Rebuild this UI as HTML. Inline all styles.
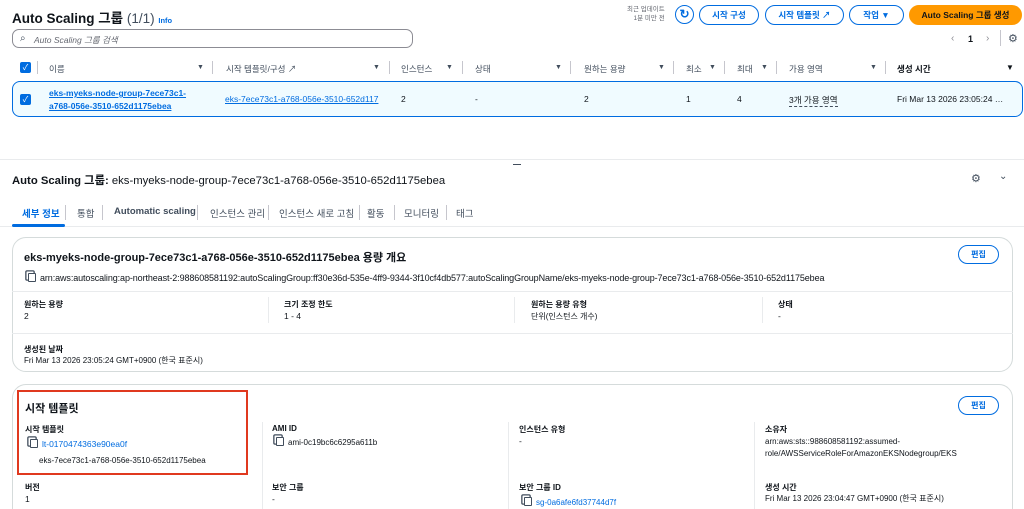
<!DOCTYPE html>
<html><head><meta charset="utf-8"><style>
*{box-sizing:border-box;margin:0;padding:0}
html{width:1024px;height:509px;overflow:hidden}
body{width:1024px;height:509px;overflow:hidden;background:#fff;font-family:"Liberation Sans","Noto Sans CJK KR",sans-serif;color:#0f141a;position:relative;font-size:9px}
.a{position:absolute;white-space:nowrap}
.btn{position:absolute;height:20px;border:1.5px solid #006ce0;border-radius:10px;color:#006ce0;font-weight:bold;font-size:8.5px;display:flex;align-items:center;justify-content:center}
.lnk{color:#006ce0}
.u{text-decoration:underline}
.hdr{font-size:8.5px;color:#414d5c}
.sep{position:absolute;width:1px;background:#c6c6cd}
.tri{font-size:7px;color:#414d5c}
.card{position:absolute;border:1px solid #d5dbdb;border-radius:14px;background:#fff}
.lbl{font-size:8px;font-weight:bold;color:#0f141a}
.val{font-size:8.5px;color:#0f141a}
.cb{position:absolute;width:11px;height:11px;background:#006ce0;border-radius:2px;color:#fff;font-size:8px;line-height:11px;text-align:center}
.copy{display:inline-block;width:8px;height:9px;border:1.3px solid #414d5c;border-radius:1px;margin-right:4px;vertical-align:-1px;box-shadow:-2px -2px 0 -0.5px #fff,-2px -2px 0 0.8px #414d5c}
.tab{position:absolute;top:206px;font-size:9.5px;color:#414d5c;white-space:nowrap}
</style></head><body>
<div class="a" style="left:12px;top:7px;font-size:13.5px;font-weight:bold">Auto Scaling 그룹 <span style="font-weight:normal;color:#414d5c">(1/1)</span> <span style="font-size:7.5px;color:#006ce0">Info</span></div>
<div class="a" style="left:627px;top:5px;font-size:6.5px;color:#656871;text-align:right;line-height:9px">최근 업데이트<br>&nbsp;&nbsp;1분 미만 전</div>
<div class="a" style="left:675px;top:5px;width:19px;height:19px;border:1.5px solid #006ce0;border-radius:50%;color:#006ce0;font-size:12px;text-align:center;line-height:16px;font-weight:bold">↻</div>
<div class="btn" style="left:699px;top:5px;width:60px">시작 구성</div>
<div class="btn" style="left:765px;top:5px;width:79px">시작 템플릿 ↗</div>
<div class="btn" style="left:849px;top:5px;width:55px">작업 ▼</div>
<div class="btn" style="left:909px;top:5px;width:113px;background:#ff9900;border-color:#ff9900;color:#0f141a">Auto Scaling 그룹 생성</div>
<div class="a" style="left:12px;top:29px;width:401px;height:19px;border:1px solid #8c8c94;border-radius:7px"></div>
<div class="a" style="left:20px;top:33px;font-size:10px;color:#414d5c">⌕</div>
<div class="a" style="left:34px;top:34px;font-size:8.5px;font-style:italic;color:#656871">Auto Scaling 그룹 검색</div>
<div class="a" style="left:951px;top:33px;color:#8c8c94;font-size:10px">‹</div>
<div class="a" style="left:968px;top:34px;font-weight:bold;font-size:9px">1</div>
<div class="a" style="left:986px;top:33px;color:#8c8c94;font-size:10px">›</div>
<div class="sep" style="left:1000px;top:30px;height:16px"></div>
<div class="a" style="left:1008px;top:32px;font-size:11px;color:#414d5c">⚙</div>
<div class="cb" style="left:20px;top:62px">✓</div>
<div class="sep" style="left:37px;top:61px;height:13px"></div>
<div class="a hdr" style="left:49px;top:63px">이름</div><div class="a tri" style="left:197px;top:64px">▼</div><div class="sep" style="left:212px;top:61px;height:13px"></div>
<div class="a hdr" style="left:226px;top:63px">시작 템플릿/구성 ↗</div><div class="a tri" style="left:373px;top:64px">▼</div><div class="sep" style="left:389px;top:61px;height:13px"></div>
<div class="a hdr" style="left:401px;top:63px">인스턴스</div><div class="a tri" style="left:446px;top:64px">▼</div><div class="sep" style="left:462px;top:61px;height:13px"></div>
<div class="a hdr" style="left:475px;top:63px">상태</div><div class="a tri" style="left:555px;top:64px">▼</div><div class="sep" style="left:570px;top:61px;height:13px"></div>
<div class="a hdr" style="left:584px;top:63px">원하는 용량</div><div class="a tri" style="left:658px;top:64px">▼</div><div class="sep" style="left:673px;top:61px;height:13px"></div>
<div class="a hdr" style="left:686px;top:63px">최소</div><div class="a tri" style="left:709px;top:64px">▼</div><div class="sep" style="left:724px;top:61px;height:13px"></div>
<div class="a hdr" style="left:737px;top:63px">최대</div><div class="a tri" style="left:761px;top:64px">▼</div><div class="sep" style="left:776px;top:61px;height:13px"></div>
<div class="a hdr" style="left:789px;top:63px">가용 영역</div><div class="a tri" style="left:870px;top:64px">▼</div><div class="sep" style="left:885px;top:61px;height:13px"></div>
<div class="a hdr" style="left:897px;top:63px;font-weight:bold;color:#0f141a">생성 시간</div><div class="a" style="left:1006px;top:63px;font-size:8px">▼</div>
<div class="a" style="left:12px;top:81px;width:1011px;height:36px;border:1.5px solid #006ce0;border-radius:8px;background:#f0fbff"></div>
<div class="cb" style="left:20px;top:94px">✓</div>
<div class="a lnk u" style="left:49px;top:87px;font-size:8.5px;font-weight:bold;line-height:13px">eks-myeks-node-group-7ece73c1-<br>a768-056e-3510-652d1175ebea</div>
<div class="a lnk u" style="left:225px;top:94px;font-size:8.5px">eks-7ece73c1-a768-056e-3510-652d117</div>
<div class="a val" style="left:401px;top:94px">2</div>
<div class="a val" style="left:475px;top:94px">-</div>
<div class="a val" style="left:584px;top:94px">2</div>
<div class="a val" style="left:686px;top:94px">1</div>
<div class="a val" style="left:737px;top:94px">4</div>
<div class="a val" style="left:789px;top:94px;border-bottom:1px dashed #414d5c">3개 가용 영역</div>
<div class="a val" style="left:897px;top:94px">Fri Mar 13 2026 23:05:24 …</div>
<div class="a" style="left:0;top:159px;width:1024px;height:1px;background:#e9ebed"></div>
<div class="a" style="left:513px;top:164px;width:8px;height:1px;background:#414d5c"></div>
<div class="a" style="left:12px;top:172px;font-size:11.3px;font-weight:bold">Auto Scaling 그룹: <span style="font-weight:normal">eks-myeks-node-group-7ece73c1-a768-056e-3510-652d1175ebea</span></div>
<div class="a" style="left:971px;top:172px;font-size:11px;color:#414d5c">⚙</div>
<div class="a" style="left:999px;top:171px;font-size:10px;color:#414d5c">⌄</div>
<div class="a" style="left:0;top:226px;width:1024px;height:1px;background:#e9ebed"></div>
<div class="a" style="left:12px;top:224px;width:53px;height:3px;background:#006ce0;border-radius:2px"></div>
<div class="tab" style="left:22px;color:#006ce0;font-weight:bold">세부 정보</div>
<div class="sep" style="left:65px;top:205px;height:15px"></div>
<div class="tab" style="left:77px">통합</div>
<div class="sep" style="left:102px;top:205px;height:15px"></div>
<div class="tab" style="left:114px;font-weight:bold">Automatic scaling</div>
<div class="sep" style="left:197px;top:205px;height:15px"></div>
<div class="tab" style="left:210px">인스턴스 관리</div>
<div class="sep" style="left:268px;top:205px;height:15px"></div>
<div class="tab" style="left:279px">인스턴스 새로 고침</div>
<div class="sep" style="left:359px;top:205px;height:15px"></div>
<div class="tab" style="left:367px">활동</div>
<div class="sep" style="left:394px;top:205px;height:15px"></div>
<div class="tab" style="left:404px">모니터링</div>
<div class="sep" style="left:446px;top:205px;height:15px"></div>
<div class="tab" style="left:456px">태그</div>
<div class="card" style="left:12px;top:237px;width:1001px;height:135px"></div>
<div class="a" style="left:24px;top:249px;font-size:11px;font-weight:bold">eks-myeks-node-group-7ece73c1-a768-056e-3510-652d1175ebea 용량 개요</div>
<div class="btn" style="left:958px;top:245px;width:41px;height:19px;font-size:8px">편집</div>
<div class="a" style="left:28px;top:273px;font-size:9px;color:#0f141a;letter-spacing:-0.1px"><span class="copy"></span>arn:aws:autoscaling:ap-northeast-2:988608581192:autoScalingGroup:ff30e36d-535e-4ff9-9344-3f10cf4db577:autoScalingGroupName/eks-myeks-node-group-7ece73c1-a768-056e-3510-652d1175ebea</div>
<div class="a" style="left:12px;top:291px;width:1001px;height:1px;background:#e9ebed"></div>
<div class="a lbl" style="left:24px;top:299px">원하는 용량</div><div class="a val" style="left:24px;top:311px">2</div>
<div class="sep" style="left:268px;top:297px;height:26px;background:#e9ebed"></div>
<div class="a lbl" style="left:284px;top:299px">크기 조정 한도</div><div class="a val" style="left:284px;top:311px">1 - 4</div>
<div class="sep" style="left:514px;top:297px;height:26px;background:#e9ebed"></div>
<div class="a lbl" style="left:531px;top:299px">원하는 용량 유형</div><div class="a val" style="left:531px;top:311px;font-size:8px">단위(인스턴스 개수)</div>
<div class="sep" style="left:762px;top:297px;height:26px;background:#e9ebed"></div>
<div class="a lbl" style="left:778px;top:299px">상태</div><div class="a val" style="left:778px;top:311px">-</div>
<div class="a" style="left:12px;top:333px;width:1001px;height:1px;background:#e9ebed"></div>
<div class="a lbl" style="left:24px;top:344px">생성된 날짜</div><div class="a val" style="left:24px;top:355px;font-size:8px">Fri Mar 13 2026 23:05:24 GMT+0900 (한국 표준시)</div>
<div class="card" style="left:12px;top:384px;width:1001px;height:140px"></div>
<div class="a" style="left:17px;top:390px;width:231px;height:85px;border:2.5px solid #e0391f"></div>
<div class="a" style="left:25px;top:400px;font-size:11px;font-weight:bold">시작 템플릿</div>
<div class="btn" style="left:958px;top:396px;width:41px;height:19px;font-size:8px">편집</div>
<div class="a lbl" style="left:25px;top:424px">시작 템플릿</div>
<div class="a" style="left:30px;top:439px;font-size:8.5px"><span class="copy"></span><span class="lnk">lt-0170474363e90ea0f</span></div>
<div class="a val" style="left:39px;top:456px;font-size:8px">eks-7ece73c1-a768-056e-3510-652d1175ebea</div>
<div class="sep" style="left:262px;top:422px;height:58px;background:#e9ebed"></div>
<div class="a lbl" style="left:272px;top:424px">AMI ID</div>
<div class="a val" style="left:276px;top:437px;font-size:8px"><span class="copy"></span>ami-0c19bc6c6295a611b</div>
<div class="sep" style="left:508px;top:422px;height:58px;background:#e9ebed"></div>
<div class="a lbl" style="left:519px;top:424px">인스턴스 유형</div><div class="a val" style="left:519px;top:436px">-</div>
<div class="sep" style="left:754px;top:422px;height:58px;background:#e9ebed"></div>
<div class="a lbl" style="left:765px;top:424px">소유자</div>
<div class="a val" style="left:765px;top:436px;font-size:8px;line-height:12px">arn:aws:sts::988608581192:assumed-<br>role/AWSServiceRoleForAmazonEKSNodegroup/EKS</div>
<div class="a lbl" style="left:25px;top:482px">버전</div><div class="a val" style="left:25px;top:494px">1</div>
<div class="sep" style="left:262px;top:480px;height:29px;background:#e9ebed"></div>
<div class="a lbl" style="left:272px;top:482px">보안 그룹</div><div class="a val" style="left:272px;top:494px">-</div>
<div class="sep" style="left:508px;top:480px;height:29px;background:#e9ebed"></div>
<div class="a lbl" style="left:519px;top:482px">보안 그룹 ID</div>
<div class="a" style="left:524px;top:497px;font-size:8px"><span class="copy"></span><span class="lnk">sg-0a6afe6fd37744d7f</span></div>
<div class="sep" style="left:754px;top:480px;height:29px;background:#e9ebed"></div>
<div class="a lbl" style="left:765px;top:482px">생성 시간</div><div class="a val" style="left:765px;top:493px;font-size:8px">Fri Mar 13 2026 23:04:47 GMT+0900 (한국 표준시)</div>
</body></html>
